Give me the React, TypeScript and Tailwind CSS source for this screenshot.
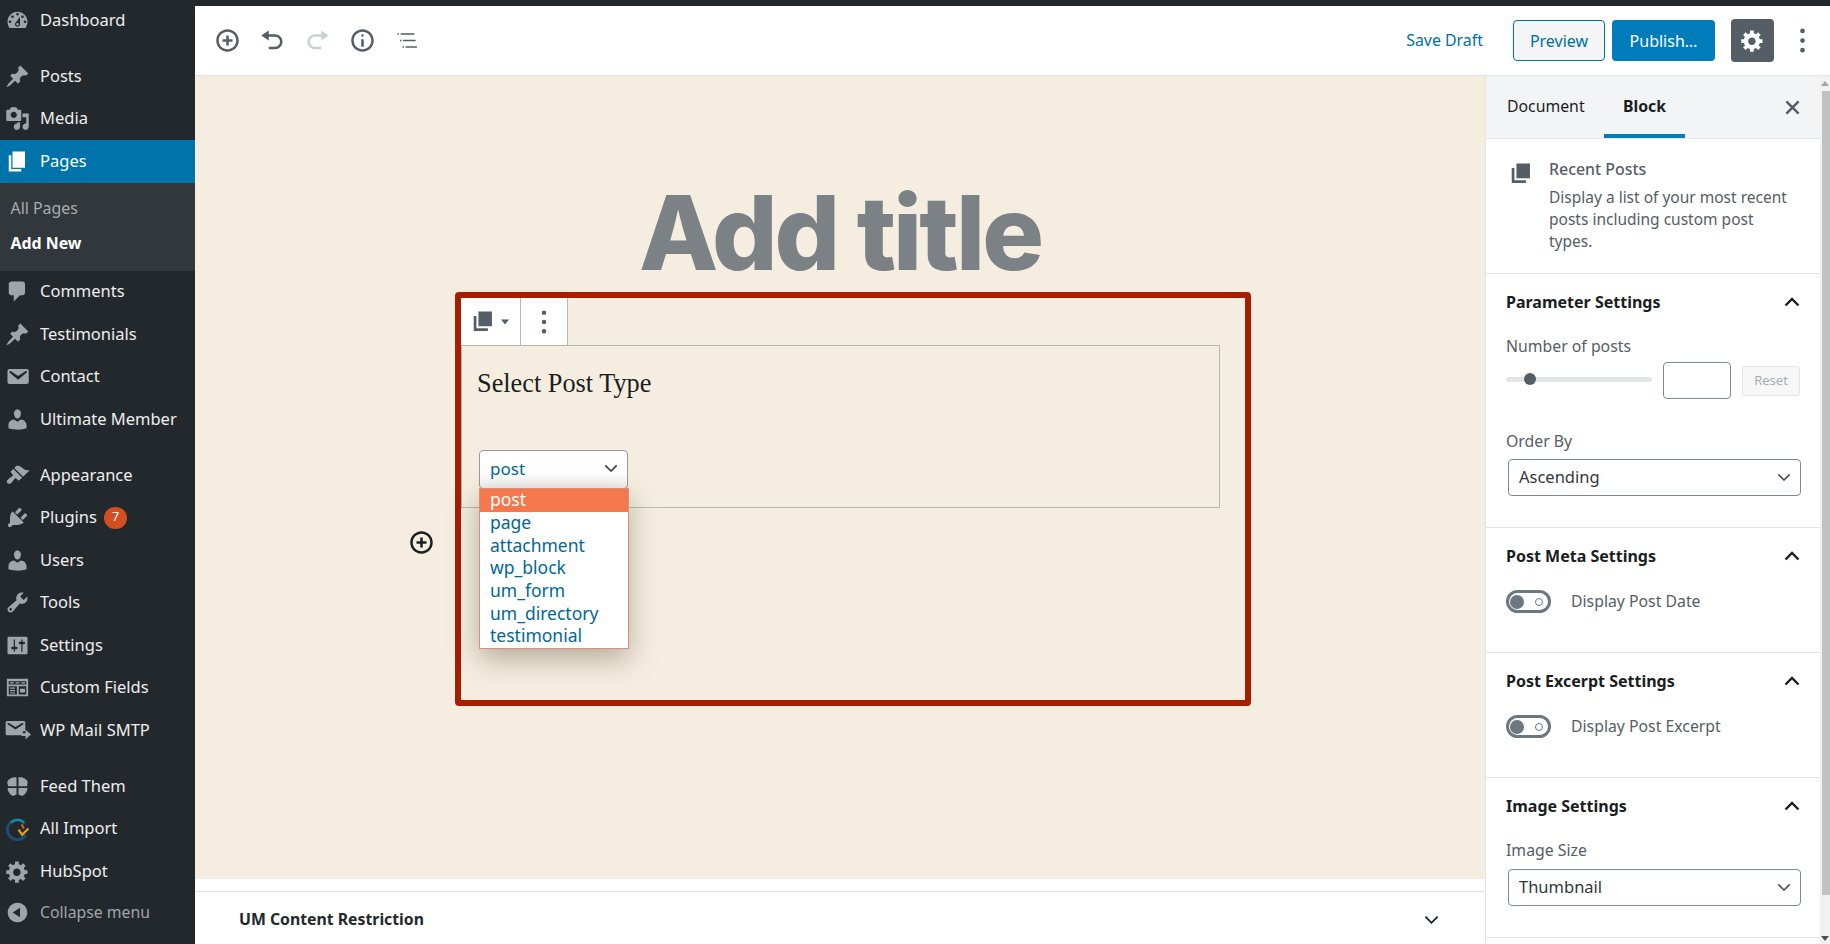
import { ReactNode } from 'react';

const UI_FONT = "font-['Noto_Sans',sans-serif]";

const icons = {
  dashboard: 'M3.76 16h12.48c1.1-1.37 1.76-3.11 1.76-5 0-4.42-3.58-8-8-8s-8 3.58-8 8c0 1.89.66 3.63 1.76 5zM10 4c.55 0 1 .45 1 1s-.45 1-1 1-1-.45-1-1 .45-1 1-1zM6 6c.55 0 1 .45 1 1s-.45 1-1 1-1-.45-1-1 .45-1 1-1zm8 0c.55 0 1 .45 1 1s-.45 1-1 1-1-.45-1-1 .45-1 1-1zm-5.37 5.55L12 7v6c0 1.1-.9 2-2 2s-2-.9-2-2c0-.57.24-1.08.63-1.45zM4 10c.55 0 1 .45 1 1s-.45 1-1 1-1-.45-1-1 .45-1 1-1zm12 0c.55 0 1 .45 1 1s-.45 1-1 1-1-.45-1-1 .45-1 1-1zm-5 3c0-.55-.45-1-1-1s-1 .45-1 1 .45 1 1 1 1-.45 1-1z',
  pin: 'M10.44 3.02l1.82-1.82 6.36 6.35-1.83 1.82c-1.05-.68-2.48-.57-3.41.36l-.75.75c-.92.93-1.04 2.35-.35 3.41l-1.83 1.82-2.41-2.41-2.8 2.79c-.42.42-3.38 2.71-3.8 2.29s1.86-3.39 2.28-3.81l2.79-2.79L4.1 9.36l1.83-1.82c1.05.69 2.48.57 3.4-.36l.75-.75c.93-.92 1.05-2.35.36-3.41z',
  media: 'M13 11V4c0-.55-.45-1-1-1h-1.67L9 1H5L3.67 3H2c-.55 0-1 .45-1 1v7c0 .55.45 1 1 1h10c.55 0 1-.45 1-1zM7 4.5c1.38 0 2.5 1.12 2.5 2.5S8.38 9.5 7 9.5 4.5 8.38 4.5 7 5.62 4.5 7 4.5zM14 6h5v10.5c0 1.38-1.12 2.5-2.5 2.5S14 17.88 14 16.5s1.12-2.5 2.5-2.5c.17 0 .34.02.5.05V9h-3V6zm-4 8.05V13h2v3.5c0 1.38-1.12 2.5-2.5 2.5S7 17.88 7 16.5 8.12 14 9.5 14c.17 0 .34.02.5.05z',
  page: 'M6 15V2h10v13H6zm-1 1h8v2H3V5h2v11z',
  comment: 'M5 2h9c1.1 0 2 .9 2 2v7c0 1.1-.9 2-2 2h-2l-5 5v-5H5c-1.1 0-2-.9-2-2V4c0-1.1.9-2 2-2z',
  email: 'M3.87 4h13.25C18.37 4 19 4.59 19 5.79v8.42c0 1.19-.63 1.79-1.88 1.79H3.87c-1.25 0-1.88-.6-1.88-1.79V5.79c0-1.2.63-1.79 1.88-1.79zm6.62 8.6l6.74-5.53c.24-.2.43-.66.13-1.07-.29-.41-.82-.42-1.17-.17l-5.7 3.86L4.8 5.83c-.35-.25-.88-.24-1.17.17-.3.41-.11.87.13 1.07z',
  user: 'M10 9.25c-2.27 0-2.73-3.44-2.73-3.44C7 4.02 7.82 2 9.97 2c2.16 0 2.98 2.02 2.71 3.81 0 0-.41 3.44-2.68 3.44zm0 2.57L12.72 10c2.39 0 4.52 2.33 4.52 4.53v2.49s-3.65 1.13-7.24 1.13c-3.65 0-7.24-1.13-7.24-1.13v-2.49c0-2.25 1.94-4.48 4.47-4.48z',
  appearance: 'M14.48 11.06L7.41 3.99l1.5-1.5c.5-.56 2.3-.47 3.51.32 1.21.8 1.43 1.28 2.91 2.1 1.18.64 2.45 1.26 4.45.85zm-.71.71L6.7 4.7 4.93 6.47c-.39.39-.39 1.02 0 1.41l1.06 1.06c.39.39.39 1.03 0 1.42-.6.6-1.43 1.11-2.21 1.69-.35.26-.7.53-1.01.84C1.43 13.71.96 15.12 1.98 16.14c.95.95 2.4.48 3.2-.36.32-.31.59-.67.85-1.01.58-.78 1.09-1.61 1.69-2.21.39-.39 1.03-.39 1.42 0l1.06 1.06c.39.39 1.02.39 1.41 0z',
  plugin: 'M13.11 4.36L9.87 7.6 8 5.73l3.24-3.24c.35-.34 1.05-.2 1.56.32.52.51.66 1.21.31 1.55zm-8 1.77l.91-1.12 9.01 9.01-1.19.84c-.71.71-2.63 1.16-3.82 1.16H6.14L4.9 17.26c-.59.59-1.54.59-2.12 0-.59-.58-.59-1.53 0-2.12l1.24-1.24v-3.88c0-1.13.4-3.19 1.09-3.89zm7.26 3.97l3.24-3.24c.34-.35 1.04-.21 1.55.31.52.51.66 1.21.31 1.55l-3.24 3.25z',
  tools: 'M16.68 9.77c-1.34 1.34-3.3 1.67-4.95.99l-5.41 6.52c-.99.99-2.59.99-3.58 0s-.99-2.59 0-3.57l6.52-5.42c-.68-1.65-.35-3.61.99-4.95 1.28-1.28 3.12-1.62 4.72-1.06l-2.89 2.89 2.82 2.82 2.86-2.87c.53 1.58.18 3.39-1.08 4.67zM3.81 16.21c.4.39 1.04.39 1.43 0 .4-.4.4-1.04 0-1.43-.39-.4-1.03-.4-1.43 0-.39.39-.39 1.03 0 1.43z',
  settings: 'M18 16V4c0-.55-.45-1-1-1H3c-.55 0-1 .45-1 1v12c0 .55.45 1 1 1h14c.55 0 1-.45 1-1zM8 11h1c.55 0 1 .45 1 1s-.45 1-1 1H8v1.5c0 .28-.22.5-.5.5s-.5-.22-.5-.5V13H6c-.55 0-1-.45-1-1s.45-1 1-1h1V5.5c0-.28.22-.5.5-.5s.5.22.5.5V11zm5-2h-1c-.55 0-1-.45-1-1s.45-1 1-1h1V5.5c0-.28.22-.5.5-.5s.5.22.5.5V7h1c.55 0 1 .45 1 1s-.45 1-1 1h-1v5.5c0 .28-.22.5-.5.5s-.5-.22-.5-.5V9z',
  fields: 'M1.5 3h17v14h-17zM3 5v2.5h14V5zM4 5.7h3v1H4zM8.5 5.7h3v1h-3zM13 5.7h3v1h-3zM3 9v6.5h6.5V9zM11 9v6.5h6V9zM4 10h4v1H4zM4 12h4v1H4zM4 14h4v.8H4zM12 11h4v3h-4z',
  mail: 'M2.5 3h12c.8 0 1.3.5 1.3 1.3v6.2h-1.8v3H2.5c-.8 0-1.3-.5-1.3-1.3V4.3C1.2 3.5 1.7 3 2.5 3zm6 6.2l5.6-3.6c.3-.2.4-.6.2-.9-.2-.3-.6-.4-.9-.2L8.5 7.4 3.6 4.5c-.3-.2-.7-.1-.9.2-.2.3-.1.7.2.9zM13 12h3v-2.5l4 3.5-4 3.5V14h-3z',
  feed: 'M9.2 2.6C6 2.2 2.8 3.6 1.8 6.4l.6 3.3h6.8zM10.8 2.6c3.2-.4 6.4 1 7.4 3.8l-.6 3.3h-6.8zM9.2 11.2H2c.2 3 1.7 5.2 4.4 6.4l2.8-1.2zM10.8 11.2H18c-.2 3-1.7 5.2-4.4 6.4l-2.8-1.2z',
  gear: 'M18 12h-2.18c-.17.7-.44 1.35-.81 1.93l1.54 1.54-2.1 2.1-1.54-1.54c-.58.36-1.23.63-1.91.79V19H8v-2.18c-.68-.16-1.33-.43-1.91-.79l-1.54 1.54-2.12-2.12 1.54-1.54c-.36-.58-.63-1.23-.79-1.91H1V9.03h2.17c.16-.7.44-1.35.8-1.94L2.43 5.55l2.1-2.1 1.54 1.54c.58-.37 1.24-.64 1.93-.81V2h3v2.18c.68.16 1.33.43 1.91.79l1.54-1.54 2.12 2.12-1.54 1.54c.36.59.64 1.24.8 1.94H18V12zm-8.5 1.5c1.66 0 3-1.34 3-3s-1.34-3-3-3-3 1.34-3 3 1.34 3 3 3z',
  collapse: 'M10 2.16c4.33 0 7.84 3.51 7.84 7.84s-3.51 7.84-7.84 7.84S2.16 14.33 2.16 10 5.71 2.16 10 2.16zm2 11.72V6.12L6.18 9.97z',
  insert: 'M10 1c-5 0-9 4-9 9s4 9 9 9 9-4 9-9-4-9-9-9zm0 16c-3.9 0-7-3.1-7-7s3.1-7 7-7 7 3.1 7 7-3.1 7-7 7zm1-11H9v3H6v2h3v3h2v-3h3V9h-3V6z',
  undo: 'M12 5H7V2L1 6l6 4V7h5c2.2 0 4 1.8 4 4s-1.8 4-4 4H7v2h5c3.3 0 6-2.7 6-6s-2.7-6-6-6z',
  redo: 'M8 5h5V2l6 4-6 4V7H8c-2.2 0-4 1.8-4 4s1.8 4 4 4h5v2H8c-3.3 0-6-2.7-6-6s2.7-6 6-6z',
  info: 'M9 15h2V9H9v6zm1-10c-.5 0-1 .5-1 1s.5 1 1 1 1-.5 1-1-.5-1-1-1zm0-4c-5 0-9 4-9 9s4 9 9 9 9-4 9-9-4-9-9-9zm0 16c-3.9 0-7-3.1-7-7s3.1-7 7-7 7 3.1 7 7-3.1 7-7 7z',
  outline: 'M2 4.2h1.2v1.2H2zM4.5 4.2h11v1.2h-11zM4 9.4h1.2v1.2H4zM6.5 9.4h10v1.2h-10zM6 14.6h1.2v1.2H6zM8.5 14.6h9v1.2h-9z',
  dots: 'M10 4.2a1.9 1.9 0 1 0 0-3.8 1.9 1.9 0 0 0 0 3.8zm0 7.7a1.9 1.9 0 1 0 0-3.8 1.9 1.9 0 0 0 0 3.8zm0 7.7a1.9 1.9 0 1 0 0-3.8 1.9 1.9 0 0 0 0 3.8z',
  close: 'M15.6 5.8l-1.4-1.4L10 8.6 5.8 4.4 4.4 5.8 8.6 10l-4.2 4.2 1.4 1.4 4.2-4.2 4.2 4.2 1.4-1.4-4.2-4.2z',
  blockPages: 'M7 13.5V2.5h10v11zM5.5 15h8.5v2H3.5V6h2z',
};

function Icon({ d, className }: { d: string; className: string }) {
  return (
    <svg viewBox="0 0 20 20" fill="currentColor" className={className}>
      <path d={d} />
    </svg>
  );
}

function Chevron({ up, className }: { up?: boolean; className: string }) {
  return (
    <svg viewBox="0 0 16 10" fill="none" stroke="currentColor" strokeWidth={up ? 2.4 : 1.9} className={className}>
      <path d={up ? 'M1.5 8.5L8 2l6.5 6.5' : 'M1.5 1.5L8 8l6.5-6.5'} />
    </svg>
  );
}

function ImportIcon() {
  return (
    <svg viewBox="0 0 24 24" fill="none" className="w-[25px] h-[25px]">
      <path d="M19 7a9.5 9.5 0 1 0 1 11" stroke="#1a4f7a" strokeWidth="2.6" />
      <path d="M6 6.5a8 8 0 0 1 12 0" stroke="#0f8f9f" strokeWidth="2.2" />
      <path d="M13 13l3.5 5 6-6" stroke="#d9a21b" strokeWidth="2.2" />
      <path d="M16 8l2 4" stroke="#c7662a" strokeWidth="2" />
    </svg>
  );
}

function MenuRow({ icon, label, badge, active }: { icon: ReactNode; label: string; badge?: string; active?: boolean }) {
  return (
    <div className={`h-[42.5px] flex items-center pl-[40px] relative ${active ? 'bg-[#0073aa] text-white' : 'text-[#eeeeee]'}`}>
      <span className={`absolute left-[5px] w-[25px] flex justify-center ${active ? 'text-white' : 'text-[#a0a5aa]'}`}>{icon}</span>
      <span className="text-[16.5px]">{label}</span>
      {badge && (
        <span className="ml-[7px] w-[23px] h-[22px] rounded-full bg-[#d54e21] text-white text-[12.5px] flex items-center justify-center">
          {badge}
        </span>
      )}
    </div>
  );
}

function Sidebar() {
  const ic = 'w-[25px] h-[25px]';
  return (
    <aside className="w-[195px] shrink-0 bg-[#23282d] h-full overflow-hidden -mt-px">
      <MenuRow icon={<Icon d={icons.dashboard} className={ic} />} label="Dashboard" />
      <div className="h-[13.5px]" />
      <MenuRow icon={<Icon d={icons.pin} className={ic} />} label="Posts" />
      <MenuRow icon={<Icon d={icons.media} className={ic} />} label="Media" />
      <MenuRow active icon={<Icon d={icons.page} className={ic} />} label="Pages" />
      <div className="bg-[#32373c] h-[88px] pt-[9px] text-[15.9px] pl-[10.5px]">
        <div className="h-[35px] flex items-center text-[#a8acb0]">All Pages</div>
        <div className="h-[35px] flex items-center font-bold text-white">Add New</div>
      </div>
      <MenuRow icon={<Icon d={icons.comment} className={ic} />} label="Comments" />
      <MenuRow icon={<Icon d={icons.pin} className={ic} />} label="Testimonials" />
      <MenuRow icon={<Icon d={icons.email} className={ic} />} label="Contact" />
      <MenuRow icon={<Icon d={icons.user} className={ic} />} label="Ultimate Member" />
      <div className="h-[13.5px]" />
      <MenuRow icon={<Icon d={icons.appearance} className={ic} />} label="Appearance" />
      <MenuRow icon={<Icon d={icons.plugin} className={ic} />} label="Plugins" badge="7" />
      <MenuRow icon={<Icon d={icons.user} className={ic} />} label="Users" />
      <MenuRow icon={<Icon d={icons.tools} className={ic} />} label="Tools" />
      <MenuRow icon={<Icon d={icons.settings} className={ic} />} label="Settings" />
      <MenuRow icon={<Icon d={icons.fields} className={ic} />} label="Custom Fields" />
      <MenuRow icon={<Icon d={icons.mail} className="w-[27px] h-[27px] shrink-0 -ml-px" />} label="WP Mail SMTP" />
      <div className="h-[13.5px]" />
      <MenuRow icon={<Icon d={icons.feed} className={ic} />} label="Feed Them" />
      <MenuRow icon={<ImportIcon />} label="All Import" />
      <MenuRow icon={<Icon d={icons.gear} className={ic} />} label="HubSpot" />
      <div className="h-[40px] flex items-center pl-[40px] relative text-[#a0a5aa]">
        <span className="absolute left-[5px] w-[25px] flex justify-center">
          <Icon d={icons.collapse} className={ic} />
        </span>
        <span className="text-[15.8px]">Collapse menu</span>
      </div>
    </aside>
  );
}

function Header() {
  return (
    <header className="h-[70px] shrink-0 bg-white border-b border-[#e2e4e7] flex items-center pl-[20px] pr-[15px]">
      <div className="flex items-center gap-[20px] text-[#555d66]">
        <Icon d={icons.insert} className="w-[25px] h-[25px]" />
        <Icon d={icons.undo} className="w-[25px] h-[25px]" />
        <Icon d={icons.redo} className="w-[25px] h-[25px] text-[#ccd0d4]" />
        <Icon d={icons.info} className="w-[25px] h-[25px]" />
        <Icon d={icons.outline} className="w-[25px] h-[25px]" />
      </div>
      <div className="ml-auto flex items-center">
        <span className="text-[15.9px] text-[#0071a1] mr-[30px]">Save Draft</span>
        <div className="w-[92px] h-[41px] rounded-[4px] border border-[#0071a1] bg-[#f3f5f6] text-[#0071a1] text-[16px] flex items-center justify-center mr-[7px]">
          Preview
        </div>
        <div className="w-[103px] h-[41px] rounded-[4px] bg-[#007cba] text-white text-[16px] flex items-center justify-center mr-[16px]">
          Publish…
        </div>
        <div className="w-[43px] h-[43px] rounded-[4px] bg-[#555d66] text-white flex items-center justify-center mr-[16px]">
          <Icon d={icons.gear} className="w-[25px] h-[25px]" />
        </div>
        <Icon d={icons.dots} className="w-[25px] h-[25px] text-[#555d66]" />
      </div>
    </header>
  );
}

function BlockEditor() {
  const options = ['page', 'attachment', 'wp_block', 'um_form', 'um_directory', 'testimonial'];
  return (
    <div className="w-[796px] h-[414px] ml-[260px] border-[6px] border-[#a61e00] rounded-[4px] relative">
      <span className="absolute left-[-52px] top-[232px] text-[#191e23]">
        <Icon d={icons.insert} className="w-[25px] h-[25px]" />
      </span>
      <div className="flex h-[47px]">
        <div className="w-[60px] bg-white border-r border-[#b5b9bd] flex items-center pl-[8px] text-[#555d66]">
          <Icon d={icons.blockPages} className="w-[27px] h-[27px]" />
          <svg viewBox="0 0 10 6" fill="currentColor" className="w-[8px] h-[6px] ml-[5px]">
            <path d="M0 0h10L5 6z" />
          </svg>
        </div>
        <div className="w-[47px] bg-white border-r border-[#b5b9bd] flex items-center justify-center text-[#555d66]">
          <Icon d={icons.dots} className="w-[24px] h-[24px]" />
        </div>
      </div>
      <div className="w-[759px] h-[163px] border border-[#b5b9a9] pl-[15px] pt-[22.5px] relative">
        <div className="font-['Liberation_Serif',serif] text-[26.3px] leading-[30px] text-[#191e23]">Select Post Type</div>
        <div className="mt-[51.5px] w-[149px] h-[39px] ml-[2px] rounded-[4px] border border-[#999] bg-gradient-to-b from-white from-60% to-[#eeeeee] flex items-center justify-between pl-[10px] pr-[9px] pb-[2px] text-[#006799] text-[17px]">
          post
          <Chevron className="w-[14px] h-[9px] text-[#444]" />
        </div>
        <div className="absolute left-[17px] top-[142px] w-[150px] border border-[#db8e7b] bg-white shadow-[0_10px_26px_rgba(60,50,30,0.35)] text-[17.5px] text-[#006799] z-10">
          <div className="h-[23px] bg-[#f5784c] text-white pl-[10px] leading-[21px]">post</div>
          {options.map((o) => (
            <div key={o} className="h-[22.7px] pl-[10px] leading-[21px]">
              {o}
            </div>
          ))}
        </div>
      </div>
    </div>
  );
}

function Panel({ title, h, children }: { title: string; h: number; children?: ReactNode }) {
  return (
    <section style={{ height: h }} className="border-b border-[#e2e4e7] px-[20px] relative shrink-0">
      <div className="h-[57px] flex items-center justify-between pb-[2px]">
        <span className="text-[16px] font-bold text-[#191e23]">{title}</span>
        <Chevron up className="w-[16px] h-[10px] text-[#191e23]" />
      </div>
      {children}
    </section>
  );
}

function Toggle({ label }: { label: string }) {
  return (
    <div className="flex items-center gap-[20px] mt-[5px]">
      <div className="w-[45px] h-[23px] rounded-full border-[3px] border-[#6c7781] flex items-center justify-between pl-[1px] pr-[5px]">
        <span className="w-[14px] h-[14px] rounded-full bg-[#6c7781]" />
        <span className="w-[8px] h-[8px] rounded-full border-[1.5px] border-[#6c7781]" />
      </div>
      <span className="text-[15.8px] text-[#555d66]">{label}</span>
    </div>
  );
}

function SelectBox({ value }: { value: string }) {
  return (
    <div className="ml-[2px] w-[293px] h-[37px] rounded-[4px] border border-[#7e8993] flex items-center justify-between pl-[10px] pr-[9px] text-[16.5px] text-[#32373c]">
      {value}
      <Chevron className="w-[14px] h-[9px] text-[#555]" />
    </div>
  );
}

function SettingsSidebar() {
  return (
    <div className="w-[335px] shrink-0 bg-white border-l border-[#e2e4e7] flex flex-col overflow-hidden">
      <div className="h-[63px] shrink-0 bg-[#f3f4f5] border-b border-[#e2e4e7] flex relative text-[15.8px] text-[#191e23]">
        <div className="pl-[21px] w-[118px] flex items-center">Document</div>
        <div className="w-[81px] flex items-center justify-center font-bold border-b-[4px] border-[#007cba] pt-[4px]">Block</div>
        <span className="ml-auto mr-[15px] self-center text-[#555d66]">
          <Icon d={icons.close} className="w-[25px] h-[25px]" />
        </span>
      </div>
      <div className="h-[135px] shrink-0 border-b border-[#e2e4e7] flex pl-[21px] pr-[18px] pt-[21px]">
        <Icon d={icons.blockPages} className="w-[27px] h-[27px] text-[#555d66] shrink-0" />
        <div className="ml-[15px] -mt-[2px]">
          <div className="text-[15.9px] font-medium text-[#555d66] leading-[22px]">Recent Posts</div>
          <p className="mt-[6px] max-w-[250px] text-[15.5px] leading-[22px] text-[#555d66]">Display a list of your most recent posts including custom post types.</p>
        </div>
      </div>
      <Panel title="Parameter Settings" h={254}>
        <div className="text-[15.8px] text-[#555d66] leading-[20px] mt-[5px]">Number of posts</div>
        <div className="flex items-center mt-[6px]">
          <div className="w-[146px] h-[5px] rounded-full bg-[#e2e4e7] relative -mt-[2px]">
            <span className="absolute left-[18px] top-[-4px] w-[12px] h-[12px] rounded-full bg-[#555d66]" />
          </div>
          <div className="ml-[11px] w-[68px] h-[37px] rounded-[4px] border border-[#7e8993]" />
          <div className="ml-[11px] w-[58px] h-[30px] rounded-[3px] border border-[#e2e4e7] bg-[#f7f7f7] text-[#a8adb3] text-[13px] flex items-center justify-center">Reset</div>
        </div>
        <div className="text-[15.8px] text-[#555d66] leading-[20px] mt-[32px] mb-[8px]">Order By</div>
        <SelectBox value="Ascending" />
      </Panel>
      <Panel title="Post Meta Settings" h={125}>
        <Toggle label="Display Post Date" />
      </Panel>
      <Panel title="Post Excerpt Settings" h={125}>
        <Toggle label="Display Post Excerpt" />
      </Panel>
      <Panel title="Image Settings" h={160}>
        <div className="text-[15.8px] text-[#555d66] leading-[20px] mt-[5px] mb-[9px]">Image Size</div>
        <SelectBox value="Thumbnail" />
      </Panel>
    </div>
  );
}

function Scrollbar() {
  return (
    <div className="w-[10px] shrink-0 bg-[#f1f1f1] flex flex-col">
      <div className="h-[15px] flex items-center justify-center">
        <span className="w-0 h-0 border-x-[4px] border-x-transparent border-b-[5px] border-b-[#a3a3a3]" />
      </div>
      <div className="flex-1 bg-[#c1c1c1] ml-[2px] mb-[37px]" />
      <div className="h-[12px] flex items-center justify-center">
        <span className="w-0 h-0 border-x-[4px] border-x-transparent border-t-[5px] border-t-[#505050]" />
      </div>
    </div>
  );
}

export default function App() {
  return (
    <div className={`h-screen w-full flex overflow-hidden bg-[#23282d] ${UI_FONT}`}>
      <Sidebar />
      <div className="flex-1 min-w-0 flex flex-col pt-[6px]">
        <Header />
        <div className="flex-1 min-h-0 flex bg-white">
          <div className="flex-1 min-w-0 flex flex-col">
            <div className="h-[803px] shrink-0 bg-[#f5eee0] pt-[100px]">
              <h1 className="font-['Inter',sans-serif] font-extrabold text-[103px] leading-[114px] tracking-[-3px] text-[#7b8185] text-center h-[116px]">
                Add title
              </h1>
              <BlockEditor />
            </div>
            <div className="h-[13px] shrink-0 border-b border-[#e2e4e7]" />
            <div className="flex-1 flex items-center justify-between pl-[44px] pr-[46px] pt-[4px]">
              <span className="text-[15.8px] font-bold text-[#23282d]">UM Content Restriction</span>
              <Chevron className="w-[15px] h-[10px] text-[#191e23]" />
            </div>
          </div>
          <SettingsSidebar />
          <Scrollbar />
        </div>
      </div>
    </div>
  );
}
